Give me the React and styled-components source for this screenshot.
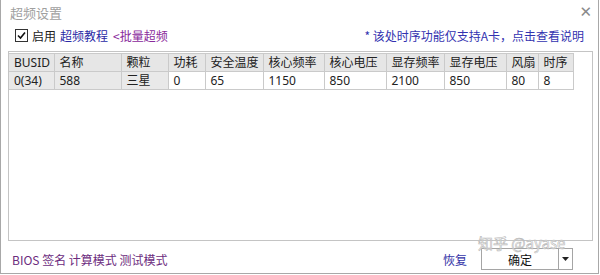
import React from "react";
import styled, { createGlobalStyle } from "styled-components";

const Global = createGlobalStyle`
  html, body { margin: 0; padding: 0; background: #fff; }
  body { font-family: "Noto Sans", "Noto Sans CJK SC", sans-serif; font-size: 12px; }
`;

const Window = styled.div`
  position: relative;
  box-sizing: border-box;
  width: 599px;
  height: 274px;
  border: 1px solid #a8a8a8;
  border-top: none;
  background: #fff;
  display: flex;
  flex-direction: column;
`;

const TitleBar = styled.div`
  height: 24px;
  display: flex;
  align-items: center;
  justify-content: space-between;
  padding: 0 6px 0 9px;
`;

const Title = styled.span`
  color: #a0a0a0;
  font-size: 13px;
  font-family: "Noto Sans CJK SC", sans-serif;
`;

const Close = styled.span`
  color: #8a8a8a;
  font-size: 15px;
  font-family: "DejaVu Sans", sans-serif;
  line-height: 1;
`;

const OptionRow = styled.div`
  height: 22px;
  display: flex;
  align-items: center;
  padding: 0 14px 0 14px;
  font-family: "Noto Sans CJK SC", sans-serif;
  font-size: 12px;
`;

const Check = styled.span`
  box-sizing: border-box;
  width: 13px;
  height: 13px;
  border: 1px solid #333;
  display: inline-flex;
  align-items: center;
  justify-content: center;
  margin-right: 4px;
`;

const Label = styled.span`
  color: ${(p) => p.$color || "#222"};
  margin-right: ${(p) => p.$gap || 0}px;
`;

const Spacer = styled.div`
  flex: 1;
`;

const ListBox = styled.div`
  box-sizing: border-box;
  margin: 5px 5px 0 7px;
  height: 190px;
  border: 1px solid #c4c4c4;
  padding: 1px 0 0 0;
`;

const Table = styled.table`
  border-collapse: collapse;
  table-layout: fixed;
  font-family: "Noto Sans", "Noto Sans CJK SC", sans-serif;
  font-size: 12px;
  color: #222;
`;

const Th = styled.th`
  height: 17px;
  padding: 0 0 0 5px;
  text-align: left;
  font-weight: normal;
  background: #e6e6e6;
  border: 1px solid #cacaca;
  border-left: ${(p) => (p.$first ? "none" : "1px solid #cacaca")};
  white-space: nowrap;
  overflow: hidden;
  line-height: 17px;
`;

const Td = styled.td`
  height: 17px;
  padding: 0 0 0 5px;
  background: ${(p) => (p.$shade ? "#e9e9e9" : "#fff")};
  border: 1px solid #cacaca;
  border-left: ${(p) => (p.$first ? "none" : "1px solid #cacaca")};
  white-space: nowrap;
  line-height: 17px;
`;

const Footer = styled.div`
  flex: 1;
  display: flex;
  align-items: center;
  padding: 4px 25px 0 11px;
  font-family: "Noto Sans CJK SC", sans-serif;
  font-size: 12px;
`;

const BottomLinks = styled.span`
  color: #6c2c7e;
`;

const Restore = styled.span`
  color: #3434a8;
  margin-right: 14px;
`;

const SplitButton = styled.div`
  box-sizing: border-box;
  width: 92px;
  height: 22px;
  border: 1px solid #a5a5a5;
  display: flex;
  background: #fff;
`;

const ButtonMain = styled.div`
  flex: 1;
  display: flex;
  align-items: center;
  justify-content: center;
  color: #111;
  font-size: 12px;
  border-right: 1px solid #a5a5a5;
`;

const ButtonArrow = styled.div`
  width: 13px;
  display: flex;
  align-items: center;
  justify-content: center;
`;

const Watermark = styled.div`
  position: absolute;
  left: 477px;
  top: 234px;
  font-family: "Noto Sans CJK SC", sans-serif;
  font-size: 15px;
  line-height: 18px;
  color: rgba(255, 255, 255, 0.6);
  -webkit-text-stroke: 0.6px #b8b8b8;
  pointer-events: none;
`;

const columns = [
  { h: "BUSID", w: 45, v: "0(34)", shade: true },
  { h: "名称", w: 67, v: "588", shade: true },
  { h: "颗粒", w: 47, v: "三星", shade: true },
  { h: "功耗", w: 37, v: "0" },
  { h: "安全温度", w: 58, v: "65" },
  { h: "核心频率", w: 61, v: "1150" },
  { h: "核心电压", w: 62, v: "850" },
  { h: "显存频率", w: 58, v: "2100" },
  { h: "显存电压", w: 62, v: "850" },
  { h: "风扇", w: 32, v: "80" },
  { h: "时序", w: 35, v: "8" },
];

export default function App() {
  return (
    <>
      <Global />
      <Window>
        <TitleBar>
          <Title>超频设置</Title>
          <Close>✕</Close>
        </TitleBar>
        <OptionRow>
          <Check>
            <svg width="9" height="9" viewBox="0 0 9 9">
              <path d="M1 4.5 L3.5 7 L8 1.5" fill="none" stroke="#111" strokeWidth="1.6" />
            </svg>
          </Check>
          <Label $gap={4}>启用</Label>
          <Label $color="#2a2aa6" $gap={5}>超频教程</Label>
          <Label $color="#8a2a9c">&lt;批量超频</Label>
          <Spacer />
          <Label $color="#3232b0">* 该处时序功能仅支持A卡，点击查看说明</Label>
        </OptionRow>
        <ListBox>
          <Table>
            <colgroup>
              {columns.map((c) => (
                <col key={c.h} style={{ width: c.w }} />
              ))}
            </colgroup>
            <thead>
              <tr>
                {columns.map((c, i) => (
                  <Th key={c.h} $first={i === 0}>{c.h}</Th>
                ))}
              </tr>
            </thead>
            <tbody>
              <tr>
                {columns.map((c, i) => (
                  <Td key={c.h} $first={i === 0} $shade={c.shade}>{c.v}</Td>
                ))}
              </tr>
            </tbody>
          </Table>
        </ListBox>
        <Footer>
          <BottomLinks>BIOS 签名 计算模式 测试模式</BottomLinks>
          <Spacer />
          <Restore>恢复</Restore>
          <SplitButton>
            <ButtonMain>确定</ButtonMain>
            <ButtonArrow>
              <svg width="7" height="4" viewBox="0 0 7 4">
                <path d="M0 0 L7 0 L3.5 4 Z" fill="#222" />
              </svg>
            </ButtonArrow>
          </SplitButton>
        </Footer>
        <Watermark>知乎 @ayase</Watermark>
      </Window>
    </>
  );
}
